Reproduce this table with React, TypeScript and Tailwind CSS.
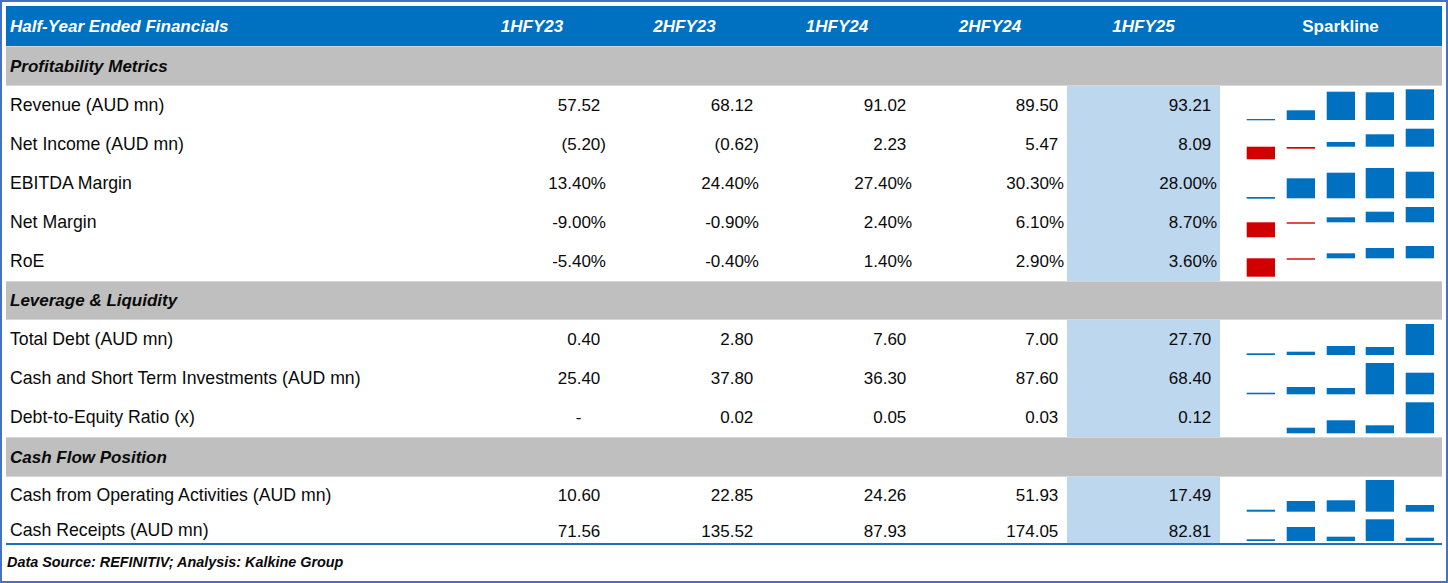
import React from 'react';

type Kind = 'n' | 'p' | 'd';
type Bar = [number, number, 'b' | 'r'] | null;
type Row = { label: string; vals: [string, Kind][]; h: string; top: number; bars: Bar[]; extra?: string };

const P = (s: string): [string, Kind] => [s, 'p'];
const N = (s: string): [string, Kind] => [s, 'n'];
const D = (s: string): [string, Kind] => [s, 'd'];

const sections: { title: string; h: string; rows: Row[] }[] = [
  {
    title: 'Profitability Metrics',
    h: 'h-[40px]',
    rows: [
      {
        label: 'Revenue (AUD mn)', h: 'h-[39px]', top: 86,
        vals: [N('57.52'), N('68.12'), N('91.02'), N('89.50'), N('93.21')],
        bars: [[119, 120.3, 'b'], [110.3, 120, 'b'], [91.7, 120, 'b'], [92.3, 120, 'b'], [89.3, 120, 'b']],
      },
      {
        label: 'Net Income (AUD mn)', h: 'h-[39px]', top: 125,
        vals: [P('(5.20)'), P('(0.62)'), N('2.23'), N('5.47'), N('8.09')],
        bars: [[146.7, 159.3, 'r'], [147, 148.7, 'r'], [142, 146.7, 'b'], [134.3, 146.7, 'b'], [128.7, 146.7, 'b']],
      },
      {
        label: 'EBITDA Margin', h: 'h-[39px]', top: 164,
        vals: [P('13.40%'), P('24.40%'), P('27.40%'), P('30.30%'), P('28.00%')],
        bars: [[197, 198.7, 'b'], [178.3, 198.3, 'b'], [172.7, 198.3, 'b'], [168, 198.3, 'b'], [171.7, 198.3, 'b']],
      },
      {
        label: 'Net Margin', h: 'h-[39px]', top: 203,
        vals: [P('-9.00%'), P('-0.90%'), P('2.40%'), P('6.10%'), P('8.70%')],
        bars: [[222.3, 237.3, 'r'], [222.3, 223.7, 'r'], [217.3, 222.3, 'b'], [211.7, 222.3, 'b'], [207, 222.3, 'b']],
      },
      {
        label: 'RoE', h: 'h-[39px]', top: 242,
        vals: [P('-5.40%'), P('-0.40%'), P('1.40%'), P('2.90%'), P('3.60%')],
        bars: [[258.3, 276.7, 'r'], [258.3, 259.7, 'r'], [253.3, 258.3, 'b'], [248, 258.3, 'b'], [246, 258.3, 'b']],
      },
    ],
  },
  {
    title: 'Leverage & Liquidity',
    h: 'h-[39px]',
    rows: [
      {
        label: 'Total Debt (AUD mn)', h: 'h-[39px]', top: 320,
        vals: [N('0.40'), N('2.80'), N('7.60'), N('7.00'), N('27.70')],
        bars: [[353.3, 355, 'b'], [351.7, 355, 'b'], [346, 355, 'b'], [347, 355, 'b'], [324, 355, 'b']],
      },
      {
        label: 'Cash and Short Term Investments (AUD mn)', h: 'h-[39px]', top: 359,
        vals: [N('25.40'), N('37.80'), N('36.30'), N('87.60'), N('68.40')],
        bars: [[392.7, 394.3, 'b'], [387, 394.3, 'b'], [388, 394.3, 'b'], [363, 394.3, 'b'], [372.7, 394.3, 'b']],
      },
      {
        label: 'Debt-to-Equity Ratio (x)', h: 'h-[39px]', top: 398,
        vals: [D('-'), N('0.02'), N('0.05'), N('0.03'), N('0.12')],
        bars: [null, [427.7, 433.3, 'b'], [420.3, 433.3, 'b'], [425.3, 433.3, 'b'], [402.3, 433.3, 'b']],
      },
    ],
  },
  {
    title: 'Cash Flow Position',
    h: 'h-[40px]',
    rows: [
      {
        label: 'Cash from Operating Activities (AUD mn)', h: 'h-[37px]', top: 477,
        vals: [N('10.60'), N('22.85'), N('24.26'), N('51.93'), N('17.49')],
        bars: [[509.7, 511.7, 'b'], [501, 511.7, 'b'], [500.3, 511.7, 'b'], [480, 511.7, 'b'], [505, 511.7, 'b']],
      },
      {
        label: 'Cash Receipts (AUD mn)', h: 'h-[29px]', top: 514, extra: 'pt-[5px]',
        vals: [N('71.56'), N('135.52'), N('87.93'), N('174.05'), N('82.81')],
        bars: [[539.3, 541, 'b'], [527, 541, 'b'], [536.7, 541, 'b'], [519.3, 541, 'b'], [537.7, 541, 'b']],
      },
    ],
  },
];

const GRID = 'grid grid-cols-[450px_152px_153px_152px_154px_153px_222px]';
const PR = ['pr-[2px]', 'pr-[2px]', 'pr-[1px]', 'pr-[3px]', 'pr-[3px]'];
const XS = [26.7, 66.7, 106.7, 145.7, 185.7];

function Spark({ row, height }: { row: Row; height: number }) {
  return (
    <svg width={222} height={height} className="block">
      {row.bars.map((b, i) =>
        b ? (
          <rect
            key={i}
            x={XS[i]}
            y={b[0] - row.top}
            width={28.3}
            height={Math.max(b[1] - b[0], 1)}
            fill={b[2] === 'b' ? '#0070c0' : '#d00000'}
          />
        ) : null
      )}
    </svg>
  );
}

function Value({ v, i, extra }: { v: [string, Kind]; i: number; extra?: string }) {
  const [t, k] = v;
  return (
    <div className={`flex items-center justify-end ${PR[i]} ${i === 4 ? 'bg-[#bdd7ee]' : ''} ${extra ?? ''}`}>
      <span>{t}</span>
      {k === 'n' && <span className="invisible">)</span>}
      {k === 'd' && <span className="invisible">00)</span>}
    </div>
  );
}

export default function App() {
  return (
    <div className="w-[1448px] h-[583px] border-2 border-[#4472c4] bg-white px-[4px] pt-[4px] font-['Liberation_Sans',Arial,sans-serif] text-[17px] text-[#0a0a0a] leading-none">
      <div className={`${GRID} h-[40px] bg-[#0070c0] text-white font-bold`}>
        <div className="flex items-center pl-[4px] italic">Half-Year Ended Financials</div>
        {['1HFY23', '2HFY23', '1HFY24', '2HFY24', '1HFY25'].map((y) => (
          <div key={y} className="flex items-center justify-center italic">{y}</div>
        ))}
        <div className="flex items-center justify-center pl-[19px]">Sparkline</div>
      </div>
      {sections.map((s) => (
        <div key={s.title}>
          <div className={`${s.h} flex items-center bg-[#bfbfbf] border-y border-[#d6d6d6] pl-[4px] font-bold italic`}>
            {s.title}
          </div>
          {s.rows.map((r) => {
            const hn = parseInt(r.h.replace(/\D/g, ''), 10);
            return (
              <div key={r.label} className={`${GRID} ${r.h}`}>
                <div className={`flex items-center pl-[4px] text-[17.7px] ${r.extra ?? 'pt-[1px]'}`}>{r.label}</div>
                {r.vals.map((v, i) => (
                  <Value key={i} v={v} i={i} extra={r.extra} />
                ))}
                <div>
                  <Spark row={r} height={hn} />
                </div>
              </div>
            );
          })}
        </div>
      ))}
      <div className="h-[2px] bg-[#1f6fbf]" />
      <div className="h-[34px] flex items-center pl-[1px] text-[14.4px] font-bold italic">
        Data Source: REFINITIV; Analysis: Kalkine Group
      </div>
    </div>
  );
}
